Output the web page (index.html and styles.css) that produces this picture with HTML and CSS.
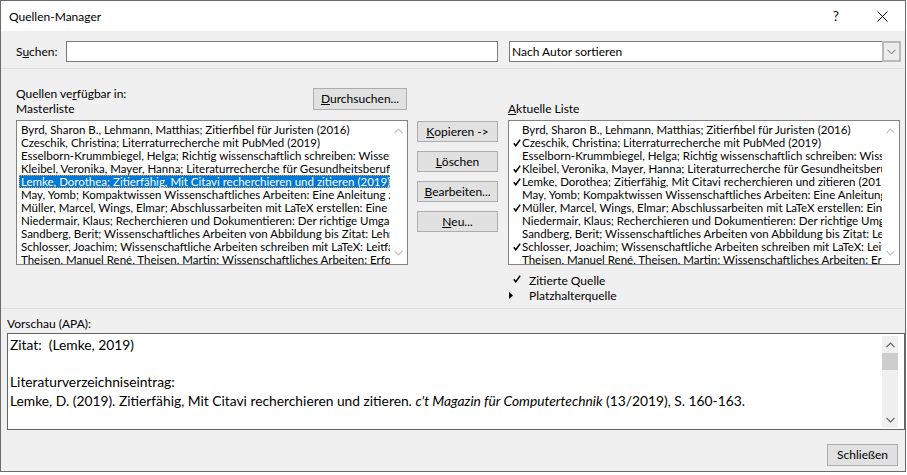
FILE: index.html
```html
<!DOCTYPE html>
<html lang="de">
<head>
<meta charset="utf-8">
<title>Quellen-Manager</title>
<link rel="stylesheet" href="styles.css">
</head>
<body>
<div class="window">
  <div class="titlebar">
    <span class="title">Quellen-Manager</span>
    <span class="cap-btn help">?</span>
    <span class="cap-btn close"><svg width="11" height="11" viewBox="0 0 11 11"><path d="M0.5 0.5L10.5 10.5M10.5 0.5L0.5 10.5" stroke="#000" stroke-width="1" fill="none"/></svg></span>
  </div>

  <div class="search">
    <span class="lbl">S<u>u</u>chen:</span>
    <div class="input"></div>
    <div class="combo">
      <span class="combo-text">Nach Autor sortieren</span>
      <span class="combo-btn"><svg width="9" height="6" viewBox="0 0 9 6"><path d="M0.5 0.8L4.5 4.8L8.5 0.8" stroke="#606060" stroke-width="1" fill="none"/></svg></span>
    </div>
  </div>

  <div class="sep"></div>

  <div class="main">
    <div class="left-head">
      <div class="labels">
        <div>Quellen ve<u>r</u>fügbar in:</div>
        <div>Masterliste</div>
      </div>
      <button class="btn browse"><u>D</u>urchsuchen...</button>
    </div>
    <div class="right-head"><u>A</u>ktuelle Liste</div>

    <div class="listbox left-list">
      <ul class="items">
        <li>Byrd, Sharon B., Lehmann, Matthias; Zitierfibel für Juristen (2016)</li>
        <li>Czeschik, Christina; Literraturrecherche mit PubMed (2019)</li>
        <li>Esselborn-Krummbiegel, Helga; Richtig wissenschaftlich schreiben: Wissenschaftssprache in Regeln und Übungen (2017)</li>
        <li>Kleibel, Veronika, Mayer, Hanna; Literaturrecherche für Gesundheitsberufe (2011)</li>
        <li class="selected">Lemke, Dorothea; Zitierfähig, Mit Citavi recherchieren und zitieren (2019)</li>
        <li>May, Yomb; Kompaktwissen Wissenschaftliches Arbeiten: Eine Anleitung zu Techniken und Schriftform (2019)</li>
        <li>Müller, Marcel, Wings, Elmar; Abschlussarbeiten mit LaTeX erstellen: Eine Einführung (2018)</li>
        <li>Niedermair, Klaus; Recherchieren und Dokumentieren: Der richtige Umgang mit Literatur im Studium (2010)</li>
        <li>Sandberg, Berit; Wissenschaftliches Arbeiten von Abbildung bis Zitat: Lehr- und Übungsbuch (2017)</li>
        <li>Schlosser, Joachim; Wissenschaftliche Arbeiten schreiben mit LaTeX: Leitfaden für Einsteiger (2016)</li>
        <li>Theisen, Manuel René, Theisen, Martin; Wissenschaftliches Arbeiten: Erfolgreich bei Bachelor- und Masterarbeit (2017)</li>
      </ul>
      <div class="vscroll light">
        <svg width="9" height="6" viewBox="0 0 9 6"><path d="M0.5 5.2L4.5 1.2L8.5 5.2" stroke="#c2c2c2" stroke-width="1.2" fill="none"/></svg>
        <svg width="9" height="6" viewBox="0 0 9 6"><path d="M0.5 0.8L4.5 4.8L8.5 0.8" stroke="#c2c2c2" stroke-width="1.2" fill="none"/></svg>
      </div>
    </div>

    <div class="mid">
      <button class="btn act"><u>K</u>opieren -&gt;</button>
      <button class="btn act"><u>L</u>öschen</button>
      <button class="btn act"><u>B</u>earbeiten...</button>
      <button class="btn act"><u>N</u>eu...</button>
    </div>

    <div class="listbox right-list">
      <ul class="items checked-list">
        <li>Byrd, Sharon B., Lehmann, Matthias; Zitierfibel für Juristen (2016)</li>
        <li class="cited">Czeschik, Christina; Literraturrecherche mit PubMed (2019)</li>
        <li>Esselborn-Krummbiegel, Helga; Richtig wissenschaftlich schreiben: Wissenschaftssprache in Regeln und Übungen (2017)</li>
        <li class="cited">Kleibel, Veronika, Mayer, Hanna; Literaturrecherche für Gesundheitsberufe (2011)</li>
        <li class="cited">Lemke, Dorothea; Zitierfähig, Mit Citavi recherchieren und zitieren (2019)</li>
        <li>May, Yomb; Kompaktwissen Wissenschaftliches Arbeiten: Eine Anleitung zu Techniken und Schriftform (2019)</li>
        <li class="cited">Müller, Marcel, Wings, Elmar; Abschlussarbeiten mit LaTeX erstellen: Eine Einführung (2018)</li>
        <li>Niedermair, Klaus; Recherchieren und Dokumentieren: Der richtige Umgang mit Literatur im Studium (2010)</li>
        <li>Sandberg, Berit; Wissenschaftliches Arbeiten von Abbildung bis Zitat: Lehr- und Übungsbuch (2017)</li>
        <li class="cited">Schlosser, Joachim; Wissenschaftliche Arbeiten schreiben mit LaTeX: Leitfaden für Einsteiger (2016)</li>
        <li>Theisen, Manuel René, Theisen, Martin; Wissenschaftliches Arbeiten: Erfolgreich bei Bachelor- und Masterarbeit (2017)</li>
      </ul>
      <div class="vscroll light">
        <svg width="9" height="6" viewBox="0 0 9 6"><path d="M0.5 5.2L4.5 1.2L8.5 5.2" stroke="#c2c2c2" stroke-width="1.2" fill="none"/></svg>
        <svg width="9" height="6" viewBox="0 0 9 6"><path d="M0.5 0.8L4.5 4.8L8.5 0.8" stroke="#c2c2c2" stroke-width="1.2" fill="none"/></svg>
      </div>
    </div>

    <div class="legend">
      <div class="legend-row"><span class="legend-icon"><svg class="check" width="8" height="8" viewBox="0 0 8 8"><path d="M0.8 4.2L2.8 6.8L7.2 0.6" stroke="#000" stroke-width="1.5" fill="none"/></svg></span>Zitierte Quelle</div>
      <div class="legend-row"><span class="legend-icon tri-wrap"><svg width="4" height="7" viewBox="0 0 4 7"><path d="M0 0L4 3.5L0 7Z" fill="#000"/></svg></span>Platzhalterquelle</div>
    </div>
  </div>

  <div class="sep"></div>

  <div class="preview-section">
    <div class="pv-label">Vorschau (APA):</div>
    <div class="preview">
      <div class="ptext">
        <p class="pline">Zitat:&nbsp; (Lemke, 2019)</p>
        <p class="pline gap">Literaturverzeichniseintrag:</p>
        <p class="pline">Lemke, D. (2019). Zitierfähig, Mit Citavi recherchieren und zitieren. <i>c't Magazin für Computertechnik</i> (13/2019), S. 160-163.</p>
      </div>
      <div class="pscroll">
        <span class="arrow"><svg width="9" height="6" viewBox="0 0 9 6"><path d="M0.5 5.2L4.5 1.2L8.5 5.2" stroke="#606060" stroke-width="1.2" fill="none"/></svg></span>
        <span class="thumb"></span>
        <span class="track"></span>
        <span class="arrow"><svg width="9" height="6" viewBox="0 0 9 6"><path d="M0.5 0.8L4.5 4.8L8.5 0.8" stroke="#606060" stroke-width="1.2" fill="none"/></svg></span>
      </div>
    </div>
  </div>

  <div class="footer">
    <button class="btn close-btn">Schließen</button>
  </div>
</div>
</body>
</html>
```

FILE: styles.css
```css
* { box-sizing: border-box; }

body {
  margin: 0;
  background: #ffffff;
}

.window {
  width: 906px;
  height: 472px;
  border: 1px solid #6b6b6b;
  background: #f0f0f0;
  font-family: "Lato", "Open Sans", sans-serif;
  font-size: 12px;
  color: #000;
  display: flex;
  flex-direction: column;
}

u {
  text-decoration-thickness: 1px;
  text-underline-offset: 1px;
}

/* title bar */
.titlebar {
  height: 30px;
  background: #fff;
  display: flex;
  align-items: center;
  padding-left: 8px;
}
.title {
  flex: 1;
  font-size: 12px;
}
.cap-btn {
  width: 46px;
  height: 30px;
  display: flex;
  align-items: center;
  justify-content: center;
}
.help {
  font-size: 13px;
}

/* search row */
.search {
  margin-top: 10px;
  height: 21px;
  display: flex;
  align-items: center;
  padding-left: 15px;
}
.lbl {
  width: 50px;
}
.input {
  width: 432px;
  height: 21px;
  background: #fff;
  border: 1px solid #7a7a7a;
}
.combo {
  margin-left: 11px;
  width: 392px;
  height: 21px;
  background: #fff;
  border: 1px solid #7a7a7a;
  display: flex;
  align-items: center;
}
.combo-text {
  flex: 1;
  padding-left: 2px;
}
.combo-btn {
  width: 19px;
  height: 21px;
  margin: -1px -1px -1px 0;
  background: #ececec;
  border: 2px solid #b9b9b9;
  display: flex;
  align-items: center;
  justify-content: center;
}

.sep {
  height: 1px;
  background: #dcdcdc;
}
.search + .sep {
  margin-top: 6px;
}

/* main area */
.main {
  height: 239px;
  padding-left: 15px;
  display: grid;
  grid-template-columns: 392px 100px 392px;
  grid-template-rows: 51px 145px auto;
}
.left-head {
  grid-column: 1;
  grid-row: 1;
  display: flex;
  justify-content: space-between;
  align-items: flex-start;
}
.labels {
  padding-top: 17px;
  line-height: 15px;
}
.right-head {
  grid-column: 3;
  grid-row: 1;
  padding-top: 32px;
  line-height: 15px;
}

.btn {
  font-family: inherit;
  font-size: 12px;
  line-height: 14px;
  color: #000;
  background: #e1e1e1;
  border: 1px solid #adadad;
  padding: 0;
  margin: 0;
  display: flex;
  align-items: center;
  justify-content: center;
}
.browse {
  margin-top: 19px;
  margin-right: 1px;
  width: 94px;
  height: 22px;
}

.listbox {
  grid-row: 2;
  background: #fff;
  border: 1px solid #828282;
  display: flex;
  overflow: hidden;
}
.left-list { grid-column: 1; }
.right-list { grid-column: 3; }

.items {
  list-style: none;
  margin: 0;
  padding: 2px 0 0 2px;
  flex: 1;
  min-width: 0;
  overflow: hidden;
  font-size: 11.5px;
}
.items li {
  height: 13px;
  line-height: 13px;
  white-space: nowrap;
  overflow: hidden;
  padding-left: 2px;
}
.items li.selected {
  background: #0078d7;
  color: #fff;
  outline: 1px dotted #f4a030;
  outline-offset: -1px;
}
.checked-list li {
  padding-left: 11px;
  position: relative;
}
.checked-list li.cited::before {
  content: "";
  position: absolute;
  left: 2px;
  top: 3px;
  width: 8px;
  height: 8px;
  background: url("data:image/svg+xml,%3Csvg xmlns='http://www.w3.org/2000/svg' width='8' height='8' viewBox='0 0 8 8'%3E%3Cpath d='M0.8 4.2L2.8 6.8L7.2 0.6' stroke='%23000' stroke-width='1.5' fill='none'/%3E%3C/svg%3E") no-repeat;
}

.vscroll {
  width: 17px;
  flex: none;
  display: flex;
  flex-direction: column;
  justify-content: space-between;
  align-items: center;
  padding: 7px 0 8px;
}

.mid {
  grid-column: 2;
  grid-row: 2 / span 2;
  padding: 1px 0 0 9px;
  display: flex;
  flex-direction: column;
  gap: 9px;
}
.act {
  width: 81px;
  height: 21px;
}

.legend {
  grid-column: 3;
  grid-row: 3;
  padding-top: 8px;
}
.legend-row {
  height: 15px;
  line-height: 15px;
  display: flex;
  align-items: center;
}
.legend-icon {
  width: 21px;
  padding-left: 5px;
  display: flex;
  align-items: center;
}
.legend-icon .check {
  margin-top: -4px;
}
.tri-wrap {
  padding-left: 1px;
}

/* preview */
.pv-label {
  padding: 7px 0 0 6px;
  line-height: 15px;
}
.preview {
  margin: 2px 0 0 6px;
  height: 97px;
  background: #fff;
  border: 1px solid #646464;
  display: flex;
  overflow: hidden;
}
.ptext {
  flex: 1;
  padding: 2px 0 0 2px;
  font-family: "Lato", "Open Sans", sans-serif;
  font-size: 13.8px;
}
.pline {
  margin: 0;
  line-height: 18.67px;
  white-space: nowrap;
}
.pline.gap {
  margin-top: 18.67px;
}
.pscroll {
  width: 16px;
  margin: 2px 6px 0 0;
  height: 92px;
  background: #f0f0f0;
  display: flex;
  flex-direction: column;
}
.pscroll .arrow {
  height: 17px;
  display: flex;
  align-items: center;
  justify-content: center;
}
.pscroll .thumb {
  height: 17px;
  background: #cdcdcd;
}
.pscroll .track {
  flex: 1;
}

.footer {
  margin-top: 14px;
  padding-right: 7px;
  display: flex;
  justify-content: flex-end;
}
.close-btn {
  width: 71px;
  height: 22px;
}
```
